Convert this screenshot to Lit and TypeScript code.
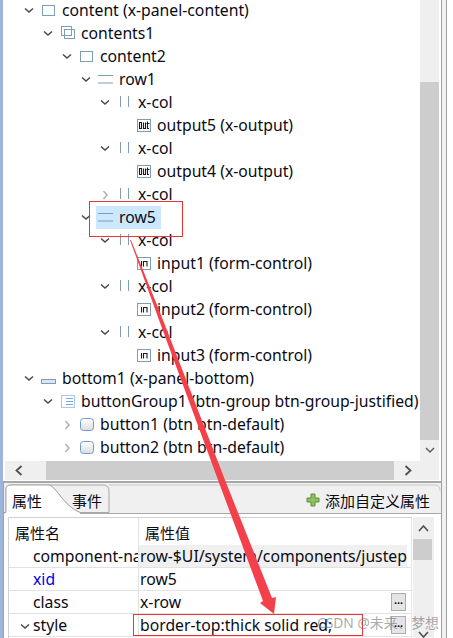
import { LitElement, html, css, svg } from "lit";
import { customElement } from "lit/decorators.js";

type Kind = "panel" | "contents" | "row" | "col" | "output" | "input" | "bottom" | "group" | "button";
interface Node { d: number; t: "o" | "c" | ""; k: Kind; label: string; sel?: boolean }

const NODES: Node[] = [
  { d: 0, t: "o", k: "panel", label: "content (x-panel-content)" },
  { d: 1, t: "o", k: "contents", label: "contents1" },
  { d: 2, t: "o", k: "panel", label: "content2" },
  { d: 3, t: "o", k: "row", label: "row1" },
  { d: 4, t: "o", k: "col", label: "x-col" },
  { d: 5, t: "", k: "output", label: "output5 (x-output)" },
  { d: 4, t: "o", k: "col", label: "x-col" },
  { d: 5, t: "", k: "output", label: "output4 (x-output)" },
  { d: 4, t: "c", k: "col", label: "x-col" },
  { d: 3, t: "o", k: "row", label: "row5", sel: true },
  { d: 4, t: "o", k: "col", label: "x-col" },
  { d: 5, t: "", k: "input", label: "input1 (form-control)" },
  { d: 4, t: "o", k: "col", label: "x-col" },
  { d: 5, t: "", k: "input", label: "input2 (form-control)" },
  { d: 4, t: "o", k: "col", label: "x-col" },
  { d: 5, t: "", k: "input", label: "input3 (form-control)" },
  { d: 0, t: "o", k: "bottom", label: "bottom1 (x-panel-bottom)" },
  { d: 1, t: "o", k: "group", label: "buttonGroup1 (btn-group btn-group-justified)" },
  { d: 2, t: "c", k: "button", label: "button1 (btn btn-default)" },
  { d: 2, t: "c", k: "button", label: "button2 (btn btn-default)" },
];

const B = "#7f9db9";
const icons: Record<Kind, unknown> = {
  panel: svg`<rect x="1.500" y="4.500" width="12" height="10" fill="#fff" stroke="${B}"/>`,
  contents: svg`<rect x="1.500" y="2.500" width="10" height="9" fill="none" stroke="${B}"/><rect x="4.500" y="5.500" width="10" height="9" fill="none" stroke="${B}"/>`,
  row: svg`<path d="M0 5.500h15M0 13h15" stroke="${B}" fill="none"/>`,
  col: svg`<path d="M3.500 3v11M11.500 3v11" stroke="${B}" fill="none"/>`,
  output: svg`<rect x="1.500" y="3.500" width="13" height="12" fill="#fff" stroke="${B}"/><path d="M3.500 6.500v6h2v-6zM7.500 6.500v6h2v-6M9.500 12.500M11.500 5.500v7h1.500M10.500 7.500h3" stroke="#1a1a1a" fill="none" stroke-width="1.100"/>`,
  input: svg`<rect x="1.500" y="3.500" width="13" height="12" fill="#fff" stroke="${B}"/><path d="M5.500 7v5.500M7.500 12.500V7.500h3.500v5" stroke="#1a1a1a" fill="none" stroke-width="1.100"/>`,
  bottom: svg`<rect x="0.500" y="10.500" width="14" height="4" fill="#dde6f0" stroke="${B}"/>`,
  group: svg`<rect x="1.500" y="3.500" width="13" height="12" fill="#fff" stroke="#5b8fd6" stroke-dasharray="1 1"/><path d="M6 6.500h7M6 9.500h7M6 12.500h7" stroke="#7aa8e4"/>`,
  button: svg`<defs><linearGradient id="bg" x1="0" y1="0" x2="0" y2="1"><stop offset="0" stop-color="#ffffff"/><stop offset="1" stop-color="#dcdcdc"/></linearGradient></defs><rect x="1.500" y="3.500" width="13" height="12" rx="3" fill="url(#bg)" stroke="#6c9bd2"/>`,
};

const twistOpen = html`<svg width="10" height="7" viewBox="0 0 10 7"><path d="M1 1.500l4 3.500 4-3.500" fill="none" stroke="#4a4a4a" stroke-width="1.500"/></svg>`;
const twistClosed = html`<svg width="7" height="10" viewBox="0 0 7 10"><path d="M1.500 1l3.500 4-3.500 4" fill="none" stroke="#b0b0b0" stroke-width="1.500"/></svg>`;

@customElement("app-root")
export class AppRoot extends LitElement {
  static styles = css`
    :host {
      display: block;
      position: relative;
      width: 453px;
      height: 638px;
      overflow: hidden;
      background: #fff;
      font-family: "Noto Sans", "Noto Sans CJK SC", sans-serif;
      font-size: 15.75px;
      color: #0a0a14;
    }
    .window { display: flex; height: 638px; }
    .strip { width: 3px; flex: none; background: #9db4dc; }
    .main { width: 438px; flex: none; display: flex; flex-direction: column; border-right: 1px solid #a0a0a0; }
    .gutter { width: 4px; flex: none; background: #f0f0f0; border-right: 1px solid #a0a0a0; }

    .pane { height: 480px; flex: none; display: flex; flex-direction: column; }
    .pane-top { height: 461px; display: flex; }
    .tree { width: 415px; margin-left: 2px; overflow: hidden; flex: none; }
    .rows { margin-top: -1px; }
    .node { height: 23px; display: flex; align-items: center; white-space: nowrap; }
    .twist { width: 16px; margin-right: 4px; flex: none; display: flex; justify-content: center; align-items: center; }
    .ico { width: 20px; height: 19px; flex: none; display: block; }
    .lab { margin-left: 1px; padding-bottom: 1px; }
    .sel { height: 23px; display: flex; align-items: center; background: #cce8ff; padding: 0 5px 0 2px; margin-left: -2px; }

    .vbar { width: 19px; flex: none; background: #efefef; display: flex; flex-direction: column; }
    .vtrack { margin-top: 82px; height: 358px; background: #cdcdcd; }
    .vdown { flex: 1; display: flex; align-items: center; justify-content: center; }
    .hbar { height: 19px; display: flex; margin-left: 2px; width: 434px; background: #cdcdcd; }
    .hbtn { width: 41px; background: #efefef; display: flex; align-items: center; padding-left: 10px; box-sizing: border-box; }
    .hfill { flex: 1; }
    .hrest { width: 45px; background: #efefef; display: flex; align-items: center; padding-left: 10px; box-sizing: border-box; }

    .props { flex: 1; border-top: 2px solid #a8a8a8; margin-top: 1px; position: relative; background: #f0f0f0; min-height: 0; border-left: 1px solid #a0a0a0; }
    .tabbar { height: 30px; display: flex; align-items: center; position: relative; font-size: 15px; }
    .tabshape { position: absolute; left: 0; top: 0; }
    .tab { position: relative; padding-top: 4px; }
    .tab.a { margin-left: 8px; width: 60px; }
    .tab.b { width: 40px; }
    .add { margin-left: auto; margin-right: 11px; display: flex; align-items: center; gap: 5px; position: relative; padding-top: 4px; }
    .sheet { background: #fff; height: 124px; padding: 3px 2px 0 4px; display: flex; gap: 1px; border-top: 1px solid #a8a8a8; }
    .table { width: 402px; flex: none; border-top: 1px solid #d0d0d0; border-left: 1px solid #d0d0d0; border-right: 1px solid #e4e4e4; }
    .tr { height: 23px; display: flex; border-bottom: 1px solid #e2e2e2; box-sizing: border-box; white-space: nowrap; align-items: stretch; }
    .tr.h { height: 27px; border-bottom: none; font-size: 15px; }
    .k { width: 130px; flex: none; border-right: 1px solid #e2e2e2; box-sizing: border-box; padding-left: 24px; overflow: hidden; display: flex; align-items: center; position: relative; }
    .v { flex: 1; min-width: 0; padding-left: 1px; overflow: hidden; display: flex; align-items: center; }
    .tr.h .k { padding-left: 6px; padding-top: 2px; }
    .tr.h .v { padding-left: 6px; padding-top: 2px; }
    .grey { background: #f0f0f0; margin-right: 4px; }
    .blue { color: #0000e6; }
    .chev { position: absolute; left: 11px; top: 9px; }
    .vt { flex: 1; }
    .more { width: 15px; height: 18px; margin-right: 5px; flex: none; background: #e4e4e4; border: 1px solid #adadad; box-sizing: border-box; display: flex; align-items: center; justify-content: center; font: bold 11px/1 "Liberation Sans", sans-serif; color: #111; padding-bottom: 3px; }
    .pbar { width: 21px; flex: none; background: #efefef; display: flex; flex-direction: column; }
    .pup { height: 22px; display: flex; align-items: center; justify-content: center; }
    .pthumb { height: 21px; width: 19px; background: #cdcdcd; }
    .pdown { margin-top: auto; height: 14px; display: flex; justify-content: center; padding-top: 4px; box-sizing: border-box; }

    .overlay { position: absolute; left: 0; top: 0; pointer-events: none; }
    .mark { position: absolute; left: 317px; top: 612px; font-size: 13.8px; color: rgba(120, 120, 120, 0.65); white-space: nowrap; }
  `;

  private node(n: Node) {
    const tw = n.t === "o" ? twistOpen : n.t === "c" ? twistClosed : "";
    const ico = html`<svg class="ico" viewBox="0 0 20 19">${icons[n.k]}</svg>`;
    return html`<div class="node" style="padding-left:${16 + n.d * 19}px">
      <span class="twist">${tw}</span>
      ${n.sel
        ? html`<span class="sel">${ico}<span class="lab">${n.label}</span></span>`
        : html`${ico}<span class="lab">${n.label}</span>`}
    </div>`;
  }

  render() {
    return html`
      <div class="window">
        <div class="strip"></div>
        <div class="main">
          <div class="pane">
            <div class="pane-top">
              <div class="tree"><div class="rows">${NODES.map((n) => this.node(n))}</div></div>
              <div class="vbar">
                <div class="vtrack"></div>
                <div class="vdown"><svg width="10" height="7" viewBox="0 0 10 7"><path d="M1 1l4 4 4-4" fill="none" stroke="#606060" stroke-width="1.500"/></svg></div>
              </div>
            </div>
            <div class="hbar">
              <div class="hbtn"><svg width="8" height="11" viewBox="0 0 8 11"><path d="M6.500 1l-5 4.500 5 4.500" fill="none" stroke="#505050" stroke-width="1.800"/></svg></div>
              <div class="hfill"></div>
              <div class="hrest"><svg width="8" height="11" viewBox="0 0 8 11"><path d="M1.500 1l5 4.500-5 4.500" fill="none" stroke="#505050" stroke-width="1.800"/></svg></div>
            </div>
          </div>
          <div class="props">
            <div class="tabbar">
              <svg class="tabshape" width="437" height="32" viewBox="0 0 437 32">
                <path d="M0 29.500H2V6Q2 2 7 2H44C52 2 58 22 76 29.500H105V8Q105 2 99 2H44" fill="#f0f0f0" stroke="#a8a8a8"/>
                <path d="M0.500 31.500V29.500H2V6Q2 2 7 2H44C52 2 58 22 76 29.500V31.500Z" fill="#fff" stroke="none"/>
                <path d="M0 29.500H2V6Q2 2 7 2H44C52 2 58 22 76 29.500" fill="none" stroke="#a8a8a8"/>
                <path d="M105 2H431Q436 2 436 8" fill="none" stroke="#c8c8c8"/>
              </svg>
              <span class="tab a">属性</span>
              <span class="tab b">事件</span>
              <span class="add">
                <svg width="14" height="14" viewBox="0 0 14 14"><path d="M5 1h4v4h4v4H9v4H5V9H1V5h4z" fill="#8fbf5a" stroke="#5e8f35"/></svg>
                添加自定义属性
              </span>
            </div>
            <div class="sheet">
              <div class="table">
                <div class="tr h"><div class="k">属性名</div><div class="v">属性值</div></div>
                <div class="tr">
                  <div class="k">component-name</div>
                  <div class="v grey">row-$UI/system/components/justep/row/row</div>
                </div>
                <div class="tr"><div class="k blue">xid</div><div class="v">row5</div></div>
                <div class="tr"><div class="k">class</div><div class="v"><span class="vt">x-row</span><span class="more">...</span></div></div>
                <div class="tr">
                  <div class="k"><svg class="chev" width="10" height="7" viewBox="0 0 10 7"><path d="M1 1.500l4 3.500 4-3.500" fill="none" stroke="#4a4a4a" stroke-width="1.500"/></svg>style</div>
                  <div class="v"><span class="vt">border-top:thick solid red;</span><span class="more">...</span></div>
                </div>
              </div>
              <div class="pbar">
                <div class="pup"><svg width="11" height="7" viewBox="0 0 11 7"><path d="M1 6l4.500-5 4.500 5" fill="none" stroke="#505050" stroke-width="1.600"/></svg></div>
                <div class="pthumb"></div>
                <div class="pdown"><svg width="11" height="7" viewBox="0 0 11 7"><path d="M1 1l4.500 5 4.500-5" fill="none" stroke="#505050" stroke-width="1.600"/></svg></div>
              </div>
            </div>
          </div>
        </div>
        <div class="gutter"></div>
      </div>
      <svg class="overlay" width="453" height="638" viewBox="0 0 453 638">
        <rect x="89.500" y="201.500" width="93" height="35" fill="none" stroke="#ee3333" stroke-width="1"/>
        <rect x="133.500" y="614.500" width="229" height="21" fill="none" stroke="#ee3333" stroke-width="1"/>
        <path d="M130 240L131 240L163 320L225 480L272 598L276 597L274 614L260 603L263 601L218 480L159 320Z" fill="#f4404a"/>
      </svg>
      <span class="mark">CSDN @未来、梦想</span>
    `;
  }
}
